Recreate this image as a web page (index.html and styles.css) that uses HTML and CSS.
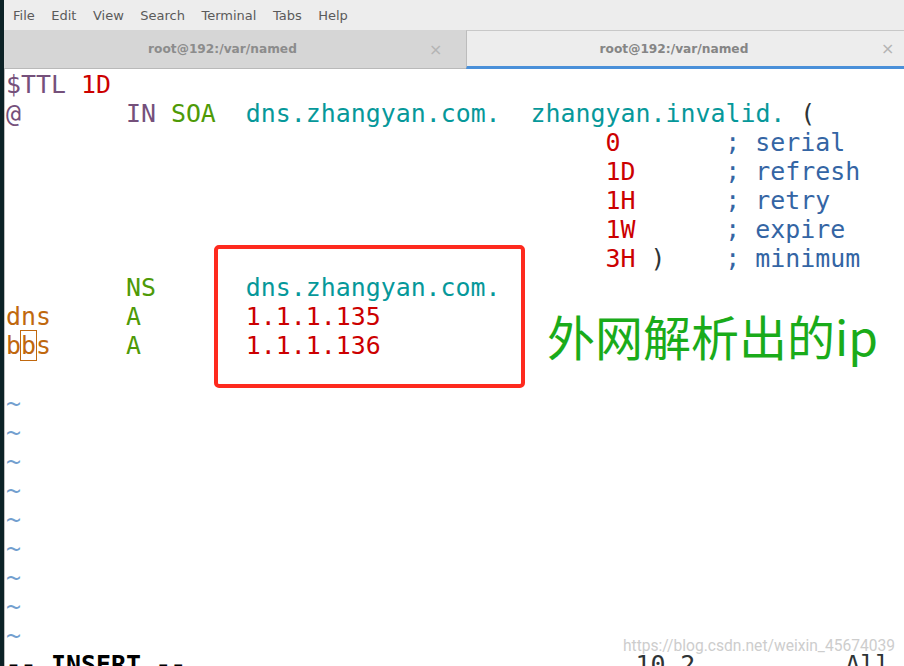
FILE: index.html
```html
<!DOCTYPE html>
<html lang="en">
<head>
    <meta charset="UTF-8">
    <meta name="viewport" content="width=device-width, initial-scale=1.0">
    <title>root@192:/var/named</title>
    <link rel="stylesheet" href="styles.css">
</head>
<body>
    <div class="window">
        <div class="menubar">
            <span class="menu-item">File</span>
            <span class="menu-item">Edit</span>
            <span class="menu-item">View</span>
            <span class="menu-item">Search</span>
            <span class="menu-item">Terminal</span>
            <span class="menu-item">Tabs</span>
            <span class="menu-item">Help</span>
        </div>

        <div class="tabbar">
            <div class="tab">
                <span class="tab-label">root@192:/var/named</span>
                <span class="tab-close">&times;</span>
            </div>
            <div class="tab tab-active">
                <span class="tab-label">root@192:/var/named</span>
                <span class="tab-close">&times;</span>
            </div>
        </div>

        <div class="term">
<pre class="buffer"><span class="pp">$TTL</span> <span class="num">1D</span>
<span class="pp">@</span>       <span class="pp">IN</span> <span class="kw">SOA</span>  <span class="dom">dns.zhangyan.com.</span>  <span class="dom">zhangyan.invalid.</span> <span class="par">(</span>
                                        <span class="num">0</span>       <span class="cmt">; serial</span>
                                        <span class="num">1D</span>      <span class="cmt">; refresh</span>
                                        <span class="num">1H</span>      <span class="cmt">; retry</span>
                                        <span class="num">1W</span>      <span class="cmt">; expire</span>
                                        <span class="num">3H</span> <span class="par">)</span>    <span class="cmt">; minimum</span>
        <span class="kw">NS</span>      <span class="dom">dns.zhangyan.com.</span>
<span class="host">dns</span>     <span class="kw">A</span>       <span class="num">1.1.1.135</span>
<span class="host">b<span class="cursor">b</span>s</span>     <span class="kw">A</span>       <span class="num">1.1.1.136</span>

<span class="tilde">~</span>
<span class="tilde">~</span>
<span class="tilde">~</span>
<span class="tilde">~</span>
<span class="tilde">~</span>
<span class="tilde">~</span>
<span class="tilde">~</span>
<span class="tilde">~</span>
<span class="tilde">~</span>
<span class="mode">-- INSERT --</span>                              <span class="ruler">10,2</span>          <span class="ruler">All</span></pre>

            <div class="note-box"></div>
            <div class="note-text">外网解析出的ip</div>
            <div class="watermark">https://blog.csdn.net/weixin_45674039</div>
        </div>
    </div>
</body>
</html>
```

FILE: styles.css
```css
html, body {
    margin: 0;
    padding: 0;
    height: 100%;
    overflow: hidden;
}

body {
    background-color: #0c2226;
}

.window {
    margin-left: 4px;
    height: 100%;
    display: flex;
    flex-direction: column;
    background-color: #ededed;
}

/* menu bar */

.menubar {
    height: 30px;
    display: flex;
    align-items: center;
    gap: 16.5px;
    padding-left: 9px;
    font-family: 'DejaVu Sans', sans-serif;
    font-size: 13px;
    color: #5a5a5a;
}

/* tabs */

.tabbar {
    height: 39px;
    display: flex;
    background-color: #d6d6d6;
}

.tab {
    flex: 0 0 462px;
    display: flex;
    align-items: center;
    box-sizing: border-box;
    border-bottom: 1px solid #b9b9b9;
    font-family: 'DejaVu Sans', sans-serif;
    font-size: 12.2px;
    font-weight: bold;
    color: #8c8c8c;
}

.tab-label {
    flex: 1;
    text-align: center;
    padding-left: 12px;
}

.tab-close {
    width: 10px;
    margin-right: 27px;
    font-weight: normal;
    font-size: 16px;
    color: #b4b4b4;
}

.tab-active {
    flex: 1;
    background-color: #ededed;
    border-top: 1px solid #c8c8c8;
    border-left: 1px solid #bcbcbc;
    border-bottom: 3px solid #4a90d9;
    color: #858585;
}

.tab-active .tab-label {
    padding-left: 0;
}

.tab-active .tab-close {
    margin-right: 13px;
}

/* terminal */

.term {
    flex: 1;
    position: relative;
    background-color: #ffffff;
    border-left: 1px solid #bdbdbd;
    padding: 1px 0 0 1px;
    overflow: hidden;
}

.buffer {
    margin: 0;
    font-family: 'DejaVu Sans Mono', monospace;
    font-size: 24.9px;
    line-height: 29px;
    color: #2e3436;
    white-space: pre;
}

.pp { color: #75507b; }
.num { color: #cc0000; }
.kw { color: #4e9a06; }
.dom { color: #06989a; }
.par { color: #2e3436; }
.cmt { color: #3465a4; }
.host { color: #c0680e; }
.tilde { color: #729fcf; }
.mode { font-weight: bold; color: #000000; }
.ruler { color: #2e3436; }

.cursor {
    outline: 1px solid #c0680e;
}

/* annotations drawn over the screenshot */

.note-box {
    position: absolute;
    left: 209px;
    top: 176px;
    width: 311px;
    height: 143px;
    box-sizing: border-box;
    border: 4px solid #fe2a1e;
    border-radius: 5px;
}

.note-text {
    position: absolute;
    left: 542px;
    top: 242px;
    font-family: 'Noto Sans CJK SC', sans-serif;
    font-size: 48px;
    line-height: 1;
    color: #1aab1a;
    white-space: nowrap;
}

.watermark {
    position: absolute;
    right: 9px;
    top: 570px;
    font-family: Roboto, sans-serif;
    font-size: 15.6px;
    line-height: 1;
    color: #cdcdcd;
    white-space: nowrap;
}
```
